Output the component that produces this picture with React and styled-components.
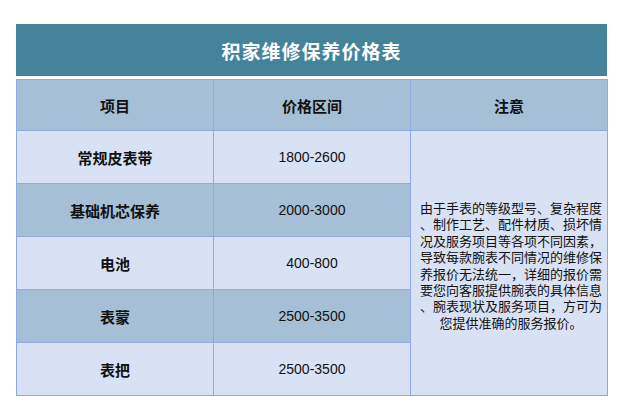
import styled, { createGlobalStyle } from 'styled-components'

const GlobalStyle = createGlobalStyle`
  html, body { margin: 0; padding: 0; background: #ffffff; }
  body { font-family: "Noto Sans CJK SC", "Liberation Sans", sans-serif; }
`

const Page = styled.div`
  padding: 24px 0 0 16px;
  width: 591px;
`

const TitleBar = styled.div`
  height: 52px;
  background: #44839a;
  color: #ffffff;
  display: flex;
  align-items: center;
  justify-content: center;
  font-size: 19px;
  font-weight: 700;
  letter-spacing: 1px;
  margin-bottom: 3px;
`

const Table = styled.table`
  width: 591px;
  table-layout: fixed;
  border-collapse: collapse;
  border-left: 1px solid #4f77c8;
  border-right: 1px solid #4f77c8;
  border-bottom: 1px solid #5a80cc;
`

const Cell = styled.td`
  border: 1px solid #8eaadf;
  background: ${props => props.$dark ? '#a5bfd6' : '#d9e1f4'};
  text-align: center;
  vertical-align: middle;
  padding: 0;
  color: #111111;
  font-size: ${props => props.$num ? '14px' : '15px'};
  font-weight: ${props => props.$num ? 400 : 700};
  font-family: ${props => props.$num ? '"Liberation Sans", sans-serif' : '"Noto Sans CJK SC", sans-serif'};
`

const HeadRow = styled.tr`
  height: 51px;
`

const BodyRow = styled.tr`
  height: 53px;
`

const Notes = styled.div`
  font-size: 13px;
  font-weight: 400;
  line-height: 16.4px;
  color: #111111;
  padding: 5px 0 0 4px;
  span { display: block; white-space: nowrap; }
`

const rows = [
  { name: '常规皮表带', price: '1800-2600', dark: false },
  { name: '基础机芯保养', price: '2000-3000', dark: true },
  { name: '电池', price: '400-800', dark: false },
  { name: '表蒙', price: '2500-3500', dark: true },
  { name: '表把', price: '2500-3500', dark: false },
]

const noteLines = [
  '由于手表的等级型号、复杂程度',
  '、制作工艺、配件材质、损坏情',
  '况及服务项目等各项不同因素，',
  '导致每款腕表不同情况的维修保',
  '养报价无法统一，详细的报价需',
  '要您向客服提供腕表的具体信息',
  '、腕表现状及服务项目，方可为',
  '您提供准确的服务报价。',
]

export default function App() {
  return (
    <>
      <GlobalStyle />
      <Page>
        <TitleBar>积家维修保养价格表</TitleBar>
        <Table>
          <colgroup>
            <col style={{ width: 197 }} />
            <col style={{ width: 197 }} />
            <col style={{ width: 197 }} />
          </colgroup>
          <tbody>
            <HeadRow>
              <Cell $dark>项目</Cell>
              <Cell $dark>价格区间</Cell>
              <Cell $dark>注意</Cell>
            </HeadRow>
            {rows.map((r, i) => (
              <BodyRow key={i}>
                <Cell $dark={r.dark}>{r.name}</Cell>
                <Cell $dark={r.dark} $num>{r.price}</Cell>
                {i === 0 ? (
                  <Cell rowSpan={5}>
                    <Notes>
                      {noteLines.map((l, j) => <span key={j}>{l}</span>)}
                    </Notes>
                  </Cell>
                ) : null}
              </BodyRow>
            ))}
          </tbody>
        </Table>
      </Page>
    </>
  )
}
